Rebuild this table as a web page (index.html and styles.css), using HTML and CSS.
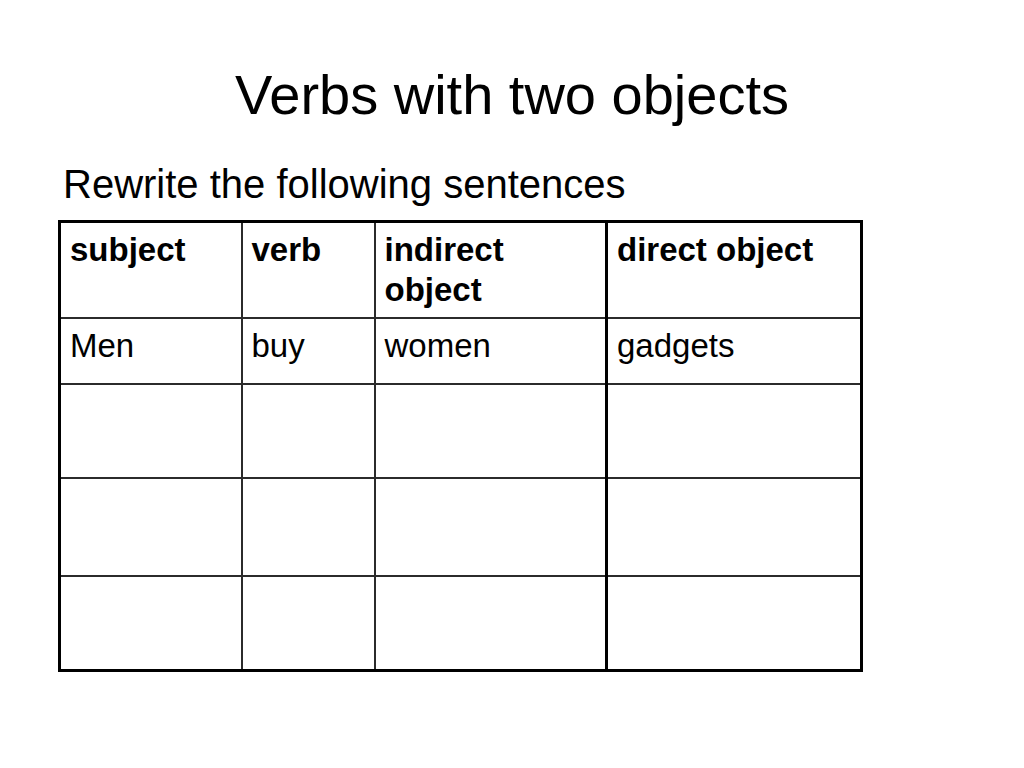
FILE: index.html
```html
<!DOCTYPE html>
<html lang="en">
<head>
<meta charset="utf-8">
<title>Verbs with two objects</title>
<link rel="stylesheet" href="styles.css">
</head>
<body>
<main class="slide">
  <h1 class="title">Verbs with two objects</h1>
  <p class="subtitle">Rewrite the following sentences</p>
  <table class="grid">
    <colgroup>
      <col class="c1"><col class="c2"><col class="c3"><col class="c4">
    </colgroup>
    <tr class="r-head">
      <th>subject</th>
      <th>verb</th>
      <th class="split">indirect object</th>
      <th>direct object</th>
    </tr>
    <tr class="r-one">
      <td>Men</td>
      <td>buy</td>
      <td class="split">women</td>
      <td>gadgets</td>
    </tr>
    <tr class="r-two">
      <td></td><td></td><td class="split"></td><td></td>
    </tr>
    <tr class="r-three">
      <td></td><td></td><td class="split"></td><td></td>
    </tr>
    <tr class="r-four">
      <td></td><td></td><td class="split"></td><td></td>
    </tr>
  </table>
</main>
</body>
</html>
```

FILE: styles.css
```css
html, body {
  margin: 0;
  padding: 0;
  background: #fff;
}

body {
  font-family: "Liberation Sans", Arial, sans-serif;
  color: #000;
}

.slide {
  width: 1024px;
  height: 768px;
  overflow: hidden;
}

.title {
  margin: 63px 0 0 0;
  font-size: 56px;
  line-height: 64px;
  font-weight: normal;
  text-align: center;
}

.subtitle {
  margin: 34px 0 0 63px;
  font-size: 40px;
  line-height: 46px;
}

.grid {
  margin: 13px 0 0 58px;
  border-collapse: collapse;
  border: 3px solid #000;
  table-layout: fixed;
  width: 805px;
}

.c1 { width: 182px; }
.c2 { width: 133px; }
.c3 { width: 232px; }
.c4 { width: 255px; }

.grid th,
.grid td {
  border: 2px solid #2b2b2b;
  padding: 7px 9px 0 9px;
  vertical-align: top;
  text-align: left;
  font-size: 33px;
  line-height: 40px;
}

.grid th {
  font-weight: bold;
}

.grid .split {
  border-right: 3px solid #000;
}

.r-head { height: 96px; }
.r-one { height: 66px; }
.r-two { height: 94px; }
.r-three { height: 98px; }
.r-four { height: 95px; }

.grid th:first-child,
.grid td:first-child {
  border-left: 3px solid #000;
}

.grid th:last-child,
.grid td:last-child {
  border-right: 3px solid #000;
}

.r-head th { border-top: 3px solid #000; }
.r-four td { border-bottom: 3px solid #000; }
```
